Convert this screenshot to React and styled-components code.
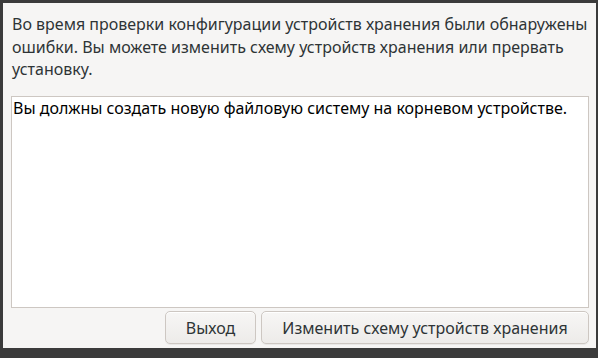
import React from "react";
import styled, { createGlobalStyle } from "styled-components";

const Global = createGlobalStyle`
  html, body {
    margin: 0;
    padding: 0;
    background: #3b3b3b;
  }
  body {
    width: 598px;
    height: 358px;
    overflow: hidden;
    font-family: "Noto Sans", "Open Sans", sans-serif;
  }
`;

const Frame = styled.div`
  width: 598px;
  height: 358px;
  box-sizing: border-box;
  padding: 3px 2px 10px 3px;
  display: flex;
`;

const Dialog = styled.div`
  flex: 1;
  background: #f6f5f4;
  padding: 10px 7px 4px 8px;
  display: flex;
  flex-direction: column;
  color: #2e3436;
`;

const Message = styled.p`
  margin: 0 0 15px 1px;
  font-size: 16px;
  line-height: 22.5px;
`;

const Details = styled.div`
  flex: 1;
  background: #ffffff;
  border: 1px solid #cdc7c2;
  padding: 0 1px;
  font-size: 16px;
  line-height: 22px;
  color: #000;
`;

const Actions = styled.div`
  display: flex;
  justify-content: flex-end;
  gap: 5px;
  margin-top: 3px;
`;

const Button = styled.button`
  height: 33px;
  width: ${(p) => p.w}px;
  box-sizing: border-box;
  border: 1px solid #cdc7c2;
  border-radius: 5px;
  background: linear-gradient(#f7f6f5, #edebe9);
  box-shadow: inset 0 1px #ffffff, 0 1px rgba(0, 0, 0, 0.05);
  font-family: "Noto Sans", "Open Sans", sans-serif;
  font-size: 16px;
  color: #2e3436;
  padding: 0;
`;

export default function App() {
  return (
    <>
      <Global />
      <Frame>
        <Dialog>
          <Message>
            Во время проверки конфигурации устройств хранения были обнаружены
            ошибки. Вы можете изменить схему устройств хранения или прервать
            установку.
          </Message>
          <Details>Вы должны создать новую файловую систему на корневом устройстве.</Details>
          <Actions>
            <Button w={91}>Выход</Button>
            <Button w={328}>Изменить схему устройств хранения</Button>
          </Actions>
        </Dialog>
      </Frame>
    </>
  );
}
